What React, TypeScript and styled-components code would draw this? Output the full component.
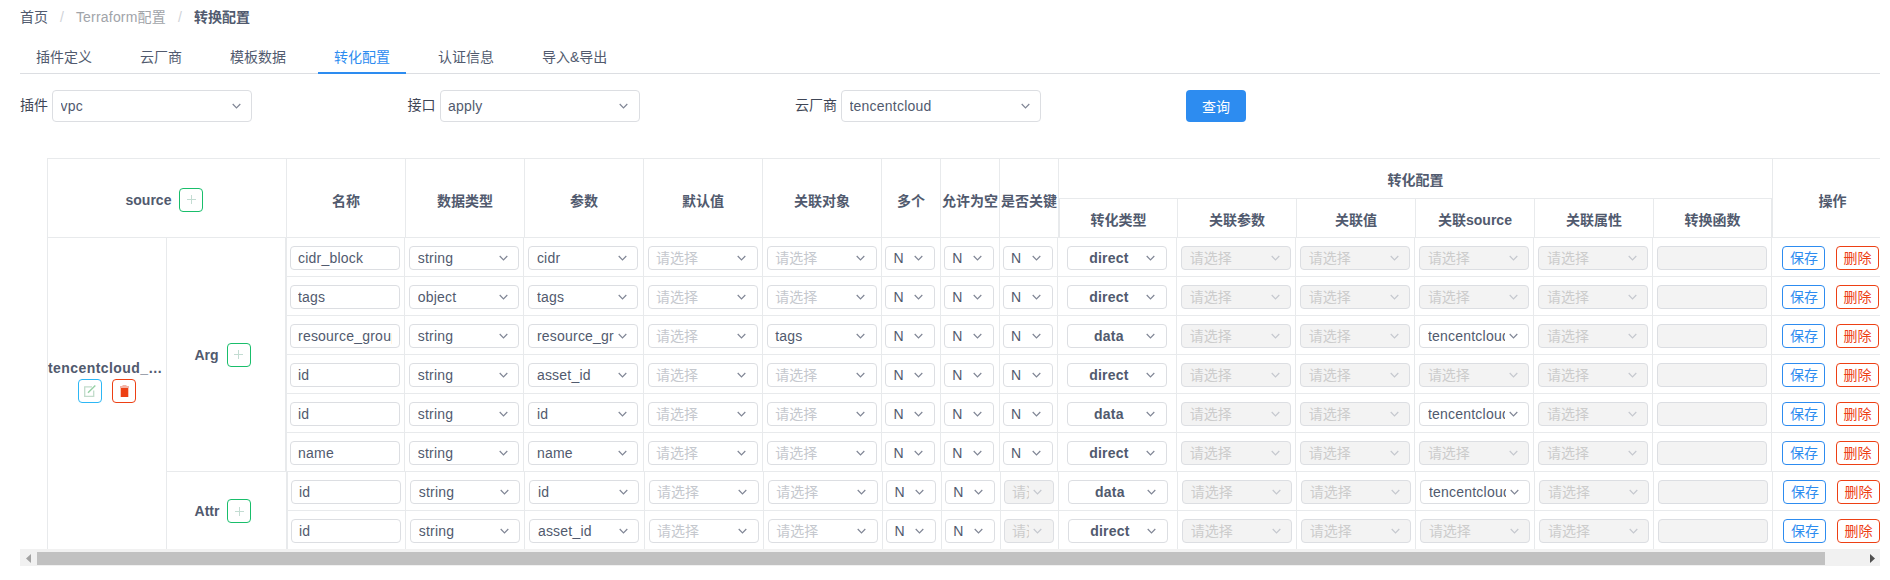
import React from "react";
import styled, { createGlobalStyle, css } from "styled-components";

const Global = createGlobalStyle`
  html, body { margin: 0; padding: 0; background: #fff; }
  body {
    font-family: "Liberation Sans", "Noto Sans CJK SC", sans-serif;
    font-size: 14px;
    color: #515a6e;
  }
`;

const LINE = "#e8eaec";
const BORDER = "#dcdee2";

const Page = styled.div`
  width: 1890px;
  height: 580px;
  box-sizing: border-box;
  padding: 7px 10px 0 20px;
  overflow: hidden;
`;

const Crumbs = styled.nav`
  display: flex;
  height: 20px;
  line-height: 20px;
  color: #515a6e;
`;
const CrumbLink = styled.span<{ $muted?: boolean }>`
  color: ${(p) => (p.$muted ? "#a1a4a9" : "#515a6e")};
  ${(p) => p.$muted && css`letter-spacing: 0.2px;`}
`;
const CrumbSep = styled.span`
  margin: 0 12px;
  color: #d0d3d8;
`;
const CrumbCurrent = styled.span`
  font-weight: 700;
`;

const TabBar = styled.div`
  display: flex;
  gap: 16px;
  height: 34px;
  margin-top: 13px;
  box-sizing: border-box;
  border-bottom: 1px solid ${BORDER};
`;
const Tab = styled.div<{ $active?: boolean }>`
  height: 34px;
  box-sizing: border-box;
  padding: 8px 16px 0;
  line-height: 18px;
  border-bottom: 2px solid ${(p) => (p.$active ? "#2d8cf0" : "transparent")};
  color: ${(p) => (p.$active ? "#2d8cf0" : "#515a6e")};
`;

const Filters = styled.div`
  display: grid;
  grid-template-columns: repeat(3, 387.5px) auto;
  margin-top: 16px;
  height: 32px;
`;
const Field = styled.label`
  display: flex;
  align-items: flex-start;
  gap: 4px;
  line-height: 30px;
  color: #3f4656;
`;
const QueryButton = styled.button`
  width: 60px;
  height: 32px;
  margin-left: 3.5px;
  padding: 0;
  border: 0;
  border-radius: 4px;
  background: #2d8cf0;
  color: #fff;
  font: inherit;
`;

const Viewport = styled.div`
  margin-top: 36px;
  height: 391px;
  padding-left: 27px;
  overflow: hidden;
`;
const Frame = styled.div`
  width: 1873px;
  border-left: 1px solid ${LINE};
`;

const HeadGrid = styled.div`
  display: grid;
  grid-template-columns: 239px repeat(5, 119px) repeat(3, 59px) repeat(6, 119px) 120px;
  grid-template-rows: 40px 39px;
  border-top: 1px solid ${LINE};
`;
const HeadCell = styled.div<{ $tall?: boolean; $span?: number; $leftDouble?: boolean; $rightDouble?: boolean }>`
  display: flex;
  align-items: center;
  justify-content: center;
  gap: 8px;
  box-sizing: border-box;
  font-weight: 700;
  white-space: nowrap;
  border-right: 1px solid ${LINE};
  border-bottom: 1px solid ${LINE};
  ${(p) => p.$tall && css`grid-row: span 2; padding-top: 3px;`}
  ${(p) => p.$span && css`grid-column: span ${p.$span};`}
  ${(p) => p.$leftDouble && css`border-left: 1px solid ${LINE};`}
  ${(p) => p.$rightDouble && css`border-right-width: 2px;`}
`;
const SourceHead = styled(HeadCell)`
  padding-right: 5px;
`;
const SubHead = styled(HeadCell)`
  padding-top: 2px;
`;
const ActionHead = styled(HeadCell)`
  grid-column: 16;
  grid-row: 1 / span 2;
  padding-top: 3px;
`;

const Body = styled.div`
  display: flex;
`;
const SourceCell = styled.div`
  width: 119px;
  flex: none;
  box-sizing: border-box;
  padding-bottom: 27px;
  display: flex;
  flex-direction: column;
  align-items: center;
  justify-content: center;
  border-right: 1px solid ${LINE};
`;
const SourceName = styled.div`
  width: 118px;
  font-weight: 700;
  line-height: 20px;
  letter-spacing: 0.42px;
  white-space: nowrap;
  overflow: hidden;
`;
const SourceActions = styled.div`
  display: flex;
  gap: 10px;
  margin-top: 1px;
`;
const Groups = styled.div`
  display: flex;
  flex-direction: column;
`;
const Group = styled.div`
  display: flex;
`;
const GroupLabel = styled.div<{ $wide?: boolean }>`
  flex: none;
  width: ${(p) => (p.$wide ? 121 : 120)}px;
  box-sizing: border-box;
  padding-right: 7px;
  display: flex;
  align-items: center;
  justify-content: center;
  gap: 8px;
  font-weight: 700;
  border-right: 2px solid ${LINE};
  ${(p) => !p.$wide && css`border-bottom: 1px solid ${LINE};`}
`;
const Rows = styled.div`
  display: flex;
  flex-direction: column;
`;
const Row = styled.div`
  display: grid;
  grid-template-columns: 118.2px repeat(4, 119.2px) repeat(3, 58.8px) repeat(6, 119.03px) 148px;
  height: 39px;
`;
const Cell = styled.div<{ $pad?: number }>`
  box-sizing: border-box;
  display: flex;
  align-items: flex-start;
  gap: 10.5px;
  padding: 8px 0 0 ${(p) => p.$pad ?? 4}px;
  border-right: 1px solid ${LINE};
  border-bottom: 1px solid ${LINE};
`;

const SelectBox = styled.div<{ $w: number; $h?: number; $disabled?: boolean; $placeholder?: boolean; $strong?: boolean }>`
  flex: none;
  display: flex;
  align-items: center;
  box-sizing: border-box;
  width: ${(p) => p.$w}px;
  height: ${(p) => p.$h ?? 24}px;
  padding-left: 7.5px;
  border: 1px solid ${BORDER};
  border-radius: 4px;
  line-height: 22px;
  background: ${(p) => (p.$disabled ? "#f3f3f3" : "#fff")};
  color: ${(p) => (p.$disabled ? "#ccc" : p.$placeholder ? "#c5c8ce" : "#515a6e")};
  ${(p) => !p.$placeholder && css`letter-spacing: 0.22px;`}
  ${(p) => p.$strong && css`font-weight: 700; text-align: center;`}
`;
const SelectText = styled.span`
  flex: 1;
  min-width: 0;
  overflow: hidden;
  white-space: nowrap;
  line-height: 22px;
`;
const Chevron = styled.svg`
  flex: none;
  width: 9px;
  height: 6px;
  margin: 0 10.5px 0 4px;
`;
const TextInput = styled.input`
  display: block;
  box-sizing: border-box;
  width: 110px;
  height: 24px;
  padding: 0 7px;
  border: 1px solid ${BORDER};
  border-radius: 4px;
  outline: 0;
  font: inherit;
  letter-spacing: 0.22px;
  color: #515a6e;
  background: #fff;
  &:disabled { background: #f3f3f3; }
`;
const SmallButton = styled.button<{ $tone: string }>`
  flex: none;
  box-sizing: border-box;
  width: 43px;
  height: 24px;
  padding: 0;
  border: 1px solid ${(p) => p.$tone};
  border-radius: 4px;
  background: #fff;
  color: ${(p) => p.$tone};
  font: inherit;
  font-weight: 400;
  line-height: 22px;
`;
const IconButton = styled.button<{ $tone: string }>`
  flex: none;
  display: flex;
  align-items: center;
  justify-content: center;
  box-sizing: border-box;
  width: 24px;
  height: 24px;
  padding: 0;
  border: 1px solid ${(p) => p.$tone};
  border-radius: 4px;
  background: #fff;
`;

const ScrollTrack = styled.div`
  display: flex;
  height: 17px;
  width: 1860px;
  background: #f1f1f1;
`;
const ScrollArrow = styled.div`
  flex: none;
  width: 17px;
  display: flex;
  align-items: center;
  justify-content: center;
  padding-top: 1px;
  box-sizing: border-box;
`;
const ScrollRail = styled.div`
  flex: 1;
  padding-top: 3px;
`;
const ScrollThumb = styled.div`
  width: 1788px;
  height: 13px;
  background: #c1c1c1;
`;

const Select = ({
  value, w = 110, h, disabled, strong,
}: { value?: string; w?: number; h?: number; disabled?: boolean; strong?: boolean }) => (
  <SelectBox $w={w} $h={h} $disabled={disabled} $placeholder={!value} $strong={strong}>
    <SelectText>{value || "请选择"}</SelectText>
    <Chevron viewBox="0 0 9 6">
      <path d="M.7 1 4.5 4.800 8.300 1" fill="none" stroke={disabled ? "#c5c8ce" : "#808695"} strokeWidth="1.2" />
    </Chevron>
  </SelectBox>
);

const PlusIcon = () => (
  <svg width="9" height="9" viewBox="0 0 9 9">
    <path d="M4.500 0v9M0 4.500h9" stroke="#c3dcd2" strokeWidth="1" fill="none" />
  </svg>
);
const AddButton = () => (
  <IconButton $tone="#19be6b"><PlusIcon /></IconButton>
);
const EditIcon = () => (
  <svg width="12" height="12" viewBox="0 0 12 12">
    <path d="M8 1.800H.7v9.500h9V5.500" fill="none" stroke="#c2dccb" strokeWidth="1.300" />
    <path d="M4 7.800 11.300.6" fill="none" stroke="#96d0a4" strokeWidth="1.400" />
  </svg>
);
const TrashIcon = () => (
  <svg width="9" height="12" viewBox="0 0 9 12">
    <path d="M2.500 0h4v1h2.500v2H0V1h2.500z" fill="#f3b4a6" />
    <path d="M.7 3h7.600v9H.7z" fill="#ed4014" />
  </svg>
);

type RowData = {
  name: string; type: string; param: string; target?: string; kind: string; source?: string; keyDisabled?: boolean;
};

const argRows: RowData[] = [
  { name: "cidr_block", type: "string", param: "cidr", kind: "direct" },
  { name: "tags", type: "object", param: "tags", kind: "direct" },
  { name: "resource_group_id", type: "string", param: "resource_group", target: "tags", kind: "data", source: "tencentcloud_vpc" },
  { name: "id", type: "string", param: "asset_id", kind: "direct" },
  { name: "id", type: "string", param: "id", kind: "data", source: "tencentcloud_vpc" },
  { name: "name", type: "string", param: "name", kind: "direct" },
];
const attrRows: RowData[] = [
  { name: "id", type: "string", param: "id", kind: "data", source: "tencentcloud_vpc", keyDisabled: true },
  { name: "id", type: "string", param: "asset_id", kind: "direct", keyDisabled: true },
];

const ConfigRow = ({ row }: { row: RowData }) => (
  <Row>
    <Cell $pad={3}><TextInput readOnly value={row.name} /></Cell>
    <Cell><Select value={row.type} /></Cell>
    <Cell><Select value={row.param} /></Cell>
    <Cell><Select /></Cell>
    <Cell><Select value={row.target} /></Cell>
    <Cell $pad={3}><Select value="N" w={50} /></Cell>
    <Cell $pad={3}><Select value="N" w={50} /></Cell>
    {row.keyDisabled ? (
      <Cell $pad={3}><Select w={50} disabled /></Cell>
    ) : (
      <Cell $pad={3}><Select value="N" w={50} /></Cell>
    )}
    <Cell $pad={8.6}><Select value={row.kind} w={100} strong /></Cell>
    <Cell><Select disabled /></Cell>
    <Cell><Select disabled /></Cell>
    <Cell>{row.source ? <Select value={row.source} /> : <Select disabled />}</Cell>
    <Cell><Select disabled /></Cell>
    <Cell><TextInput disabled /></Cell>
    <Cell $pad={10}>
      <SmallButton $tone="#2d8cf0">保存</SmallButton>
      <SmallButton $tone="#ed4014">删除</SmallButton>
    </Cell>
  </Row>
);

const columns = ["名称", "数据类型", "参数", "默认值", "关联对象", "多个", "允许为空", "是否关键"];
const subColumns = ["转化类型", "关联参数", "关联值", "关联source", "关联属性", "转换函数"];
const tabs = ["插件定义", "云厂商", "模板数据", "转化配置", "认证信息", "导入&导出"];

export default function App() {
  return (
    <Page>
      <Global />
      <Crumbs>
        <CrumbLink>首页</CrumbLink>
        <CrumbSep>/</CrumbSep>
        <CrumbLink $muted>Terraform配置</CrumbLink>
        <CrumbSep>/</CrumbSep>
        <CrumbCurrent>转换配置</CrumbCurrent>
      </Crumbs>
      <TabBar>
        {tabs.map((t) => (
          <Tab key={t} $active={t === "转化配置"}>{t}</Tab>
        ))}
      </TabBar>
      <Filters>
        <Field>插件<Select value="vpc" w={200} h={32} /></Field>
        <Field>接口<Select value="apply" w={200} h={32} /></Field>
        <Field>云厂商<Select value="tencentcloud" w={200} h={32} /></Field>
        <div><QueryButton>查询</QueryButton></div>
      </Filters>
      <Viewport>
        <Frame>
          <HeadGrid>
            <SourceHead $tall>source<AddButton /></SourceHead>
            {columns.map((c) => (
              <HeadCell key={c} $tall>{c}</HeadCell>
            ))}
            <HeadCell $span={6}>转化配置</HeadCell>
            <ActionHead>操作</ActionHead>
            {subColumns.map((c, i) => (
              <SubHead key={c} $leftDouble={i === 0} $rightDouble={i === 5}>{c}</SubHead>
            ))}
          </HeadGrid>
          <Body>
            <SourceCell>
              <SourceName>tencentcloud_…</SourceName>
              <SourceActions>
                <IconButton $tone="#2db7f5"><EditIcon /></IconButton>
                <IconButton $tone="#ed4014"><TrashIcon /></IconButton>
              </SourceActions>
            </SourceCell>
            <Groups>
              <Group>
                <GroupLabel>Arg<AddButton /></GroupLabel>
                <Rows>{argRows.map((r, i) => <ConfigRow key={i} row={r} />)}</Rows>
              </Group>
              <Group>
                <GroupLabel $wide>Attr<AddButton /></GroupLabel>
                <Rows>{attrRows.map((r, i) => <ConfigRow key={i} row={r} />)}</Rows>
              </Group>
            </Groups>
          </Body>
        </Frame>
      </Viewport>
      <ScrollTrack>
        <ScrollArrow>
          <svg width="6" height="9" viewBox="0 0 6 9"><path d="M5 0v9L0 4.500z" fill="#a3a3a3" /></svg>
        </ScrollArrow>
        <ScrollRail><ScrollThumb /></ScrollRail>
        <ScrollArrow>
          <svg width="6" height="9" viewBox="0 0 6 9"><path d="M1 0v9l5-4.500z" fill="#505050" /></svg>
        </ScrollArrow>
      </ScrollTrack>
    </Page>
  );
}
